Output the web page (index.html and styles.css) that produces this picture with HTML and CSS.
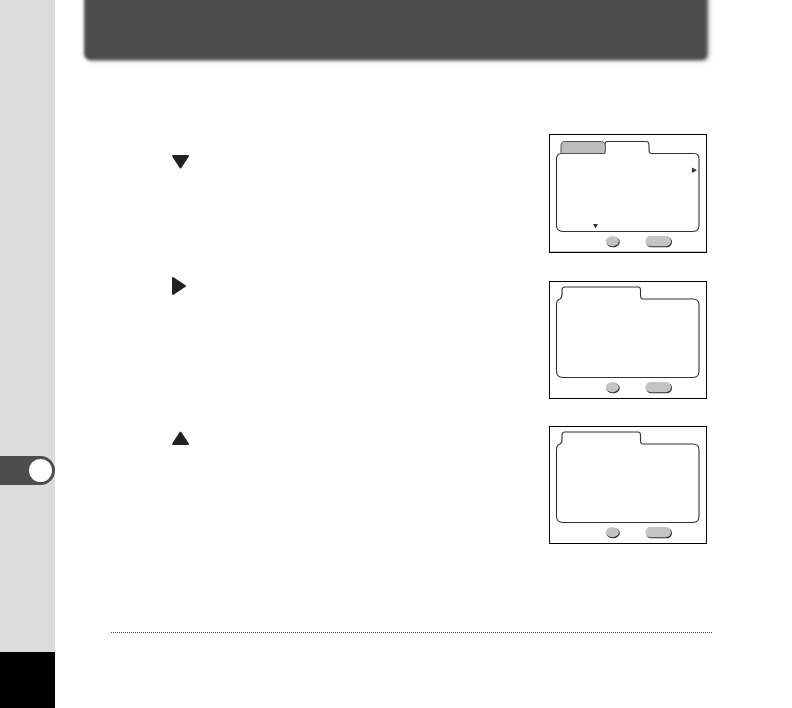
FILE: index.html
```html
<!doctype html>
<html>

<head>
    <title>Manual page</title>
    <link rel="stylesheet" href="styles.css">
</head>

<body>
    <aside class="sidebar">
        <div class="chapter-tab"><span class="chapter-dot"></span></div>
        <div class="page-corner"></div>
    </aside>

    <main class="page">
        <header class="banner"></header>

        <section class="step step-first">
            <svg class="key key-down" width="20" height="16" viewBox="0 0 20 16">
                <path d="M2 2H17L9.500 13.500Z" />
            </svg>
            <svg class="screen" width="158" height="119" viewBox="0 0 158 119">
                <rect class="frame" x="0.500" y="0.500" width="157" height="118" />
                <path class="frame" d="M0 118.300H158" />
                <path class="panel" d="M7.500 25Q7.500 19.500 13 19.500H54.500Q56 19.500 56 15V11Q56 7.500 58 7.500H97Q100 7.500 100 11V16Q100 19.500 103 19.500H145Q150 19.500 150 25V91Q150 97.500 144 97.500H14Q7.500 97.500 7.500 91Z" />
                <path class="tab-off" d="M12 19.500V12Q12 7.500 15.500 7.500H52.500Q56 7.500 56.500 13L56 19.500Z" />
                <path class="mark" d="M143 33.500L148 36.200L143 39Z" />
                <path class="mark" d="M44 90H49L46.500 94.500Z" />
                <ellipse class="btn-shade" cx="64" cy="108" rx="6.800" ry="5.300" />
                <ellipse class="btn-face" cx="63.300" cy="107.300" rx="6.500" ry="5" />
                <rect class="btn-shade" x="97" y="102.700" width="26" height="10.600" rx="5.300" />
                <rect class="btn-face" x="96.500" y="102" width="25.500" height="10.300" rx="5.100" />
            </svg>
        </section>

        <section class="step step-second">
            <svg class="key key-right" width="16" height="20" viewBox="0 0 16 20">
                <path d="M1 2V18L13 10Z" />
            </svg>
            <svg class="screen" width="158" height="118" viewBox="0 0 158 118">
                <rect class="frame" x="0.500" y="0.500" width="157" height="117" />
                <path class="panel" d="M7.500 24Q7.500 19 11 18Q13 17 13 13V9Q13 6 16 6H89Q91.500 6 91.500 9V14Q91.500 18 94 18H144Q150 18 150 24V90Q150 96.500 144 96.500H14Q7.500 96.500 7.500 90Z" />
                <ellipse class="btn-shade" cx="64" cy="107" rx="6.800" ry="5.300" />
                <ellipse class="btn-face" cx="63.300" cy="106.300" rx="6.500" ry="5" />
                <rect class="btn-shade" x="97" y="101.700" width="26" height="10.600" rx="5.300" />
                <rect class="btn-face" x="96.500" y="101" width="25.500" height="10.300" rx="5.100" />
            </svg>
        </section>

        <section class="step step-third">
            <svg class="key key-up" width="20" height="16" viewBox="0 0 20 16">
                <path d="M9.500 2.500L17 14H2Z" />
            </svg>
            <svg class="screen" width="158" height="118" viewBox="0 0 158 118">
                <rect class="frame" x="0.500" y="0.500" width="157" height="117" />
                <path class="panel" d="M7.500 24Q7.500 19 11 18Q13 17 13 13V9Q13 6 16 6H89Q91.500 6 91.500 9V14Q91.500 18 94 18H144Q150 18 150 24V90Q150 96.500 144 96.500H14Q7.500 96.500 7.500 90Z" />
                <ellipse class="btn-shade" cx="64" cy="107" rx="6.800" ry="5.300" />
                <ellipse class="btn-face" cx="63.300" cy="106.300" rx="6.500" ry="5" />
                <rect class="btn-shade" x="97" y="101.700" width="26" height="10.600" rx="5.300" />
                <rect class="btn-face" x="96.500" y="101" width="25.500" height="10.300" rx="5.100" />
            </svg>
        </section>

        <div class="rule"></div>
    </main>
</body>

</html>
```

FILE: styles.css
```css
body,
html {
    width: 100%;
    height: 100%;
    padding: 0;
    margin: 0;
    background: #fff;
    overflow: hidden;
}

body {
    display: flex;
}

.sidebar {
    width: 55px;
    height: 708px;
    flex: none;
    display: flex;
    flex-direction: column;
    background: #dcdcdc;
}

.chapter-tab {
    width: 55px;
    height: 29px;
    margin-top: 456px;
    box-sizing: border-box;
    padding-left: 29px;
    display: flex;
    align-items: center;
    background: #4d4d4d;
    border-radius: 0 15px 15px 0;
}

.chapter-dot {
    width: 23px;
    height: 23px;
    border-radius: 50%;
    background: #fff;
}

.page-corner {
    height: 56px;
    margin-top: auto;
    background: #000;
}

.page {
    flex: 1;
    display: flex;
    flex-direction: column;
}

.banner {
    width: 623px;
    height: 70px;
    margin: -10px 0 0 29px;
    background: #4d4d4d;
    border-radius: 0 0 6px 6px;
    box-shadow: 2px 1px 3px rgba(77, 77, 77, 0.6);
    filter: blur(1.5px);
}

.step {
    display: flex;
    align-items: flex-start;
    margin-left: 116px;
    width: 536px;
}

.step-first {
    margin-top: 74px;
}

.step-second {
    margin-top: 28px;
}

.step-third {
    margin-top: 27px;
}

.screen {
    margin-left: auto;
    display: block;
}

.key path {
    fill: #222;
    stroke: #222;
    stroke-width: 2;
    stroke-linejoin: round;
}

.key-down {
    margin-top: 20px;
}

.key-right {
    margin-top: -5px;
    margin-left: 1px;
}

.key-up {
    margin-top: 4px;
}

.frame {
    fill: none;
    stroke: #000;
    stroke-width: 1;
}

.panel {
    fill: #fff;
    stroke: #333;
    stroke-width: 1.1;
}

.tab-off {
    fill: #bdbdbd;
    stroke: #555;
    stroke-width: 1;
}

.mark {
    fill: #333;
}

.btn-shade {
    fill: #333;
}

.btn-face {
    fill: #c4c4c4;
}

.rule {
    width: 601px;
    margin: 88px 0 0 56px;
    border-top: 1px dotted #444;
}
```
